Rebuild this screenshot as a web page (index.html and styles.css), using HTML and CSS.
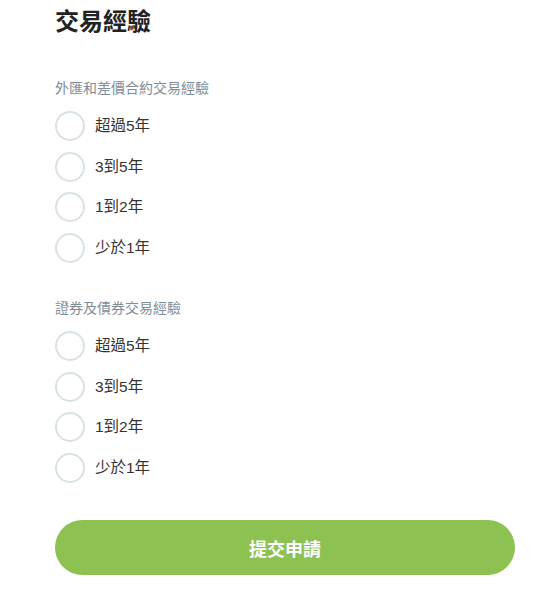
FILE: index.html
```html
<!DOCTYPE html>
<html lang="zh-Hant">
<head>
<meta charset="utf-8">
<link rel="stylesheet" href="styles.css">
</head>
<body>
<div class="page">
  <h1 class="title">交易經驗</h1>
  <section class="group group-first">
    <div class="group-label">外匯和差價合約交易經驗</div>
    <div class="options">
      <label class="option"><span class="radio"></span><span class="text">超過5年</span></label>
      <label class="option"><span class="radio"></span><span class="text">3到5年</span></label>
      <label class="option"><span class="radio"></span><span class="text">1到2年</span></label>
      <label class="option"><span class="radio"></span><span class="text">少於1年</span></label>
    </div>
  </section>
  <section class="group group-second">
    <div class="group-label">證券及債券交易經驗</div>
    <div class="options">
      <label class="option"><span class="radio"></span><span class="text">超過5年</span></label>
      <label class="option"><span class="radio"></span><span class="text">3到5年</span></label>
      <label class="option"><span class="radio"></span><span class="text">1到2年</span></label>
      <label class="option"><span class="radio"></span><span class="text">少於1年</span></label>
    </div>
  </section>
  <button class="submit">提交申請</button>
</div>
</body>
</html>
```

FILE: styles.css
```css
html, body {
  margin: 0;
  padding: 0;
  background: #ffffff;
}
body {
  font-family: "Liberation Sans", "Noto Sans CJK TC", sans-serif;
  color: #333333;
}
.page {
  width: 460px;
  padding: 7px 0 0 55px;
  display: flex;
  flex-direction: column;
}
.title {
  margin: 0;
  font-size: 24px;
  line-height: 30px;
  font-weight: 700;
  color: #222222;
}
.group {
  display: flex;
  flex-direction: column;
  gap: 13px;
}
.group-first {
  margin-top: 41px;
}
.group-second {
  margin-top: 35.5px;
}
.group-label {
  font-size: 14px;
  line-height: 20px;
  color: #7f8d97;
}
.options {
  display: flex;
  flex-direction: column;
  gap: 10.5px;
}
.option {
  display: flex;
  align-items: center;
  gap: 10px;
  height: 30px;
}
.radio {
  box-sizing: border-box;
  width: 30px;
  height: 30px;
  border-radius: 50%;
  border: 2px solid #d8e2e3;
  flex: none;
}
.text {
  font-size: 15.5px;
  line-height: 20px;
  color: #333333;
}
.submit {
  margin-top: 37.5px;
  width: 460px;
  height: 55px;
  border: none;
  border-radius: 28px;
  background: #8dc152;
  color: #ffffff;
  font-family: "Liberation Sans", "Noto Sans CJK TC", sans-serif;
  font-size: 18px;
  font-weight: 700;
  padding: 0;
}
```
